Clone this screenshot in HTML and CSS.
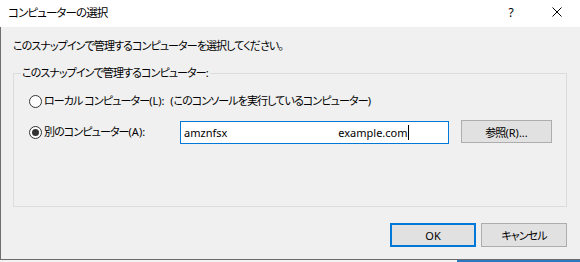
FILE: index.html
```html
<!DOCTYPE html>
<html lang="ja">
  <head>
    <meta charset="UTF-8" />
    <title>コンピューターの選択</title>
    <link rel="stylesheet" href="styles.css">
  </head>
  <body>
    <div class="dialog">
      <div class="titlebar">
        <span class="title">コンピューターの選択</span>
        <div class="caption-buttons">
          <span class="caption-btn help">?</span>
          <span class="caption-btn close">
            <svg width="10" height="10" viewBox="0 0 10 10">
              <path d="M0.5 0.5 L9.5 9.5 M9.5 0.5 L0.5 9.5" stroke="#000" stroke-width="1" fill="none"/>
            </svg>
          </span>
        </div>
      </div>

      <div class="client">
        <p class="intro">このスナップインで管理するコンピューターを選択してください。</p>

        <fieldset class="group">
          <legend>このスナップインで管理するコンピューター<span class="latin">:</span></legend>

          <div class="radio-row">
            <span class="radio"></span>
            <span class="radio-label">ローカル コンピューター<span class="latin">(L):&nbsp;&nbsp;(</span>このコンソールを実行しているコンピューター<span class="latin">)</span></span>
          </div>

          <div class="radio-row">
            <span class="radio checked"></span>
            <span class="radio-label fixed">別のコンピューター<span class="latin">(A):</span></span>
            <div class="text-input">
              <span>amznfsx</span>
              <span class="redacted"></span>
              <span>example.com</span>
              <span class="caret"></span>
            </div>
            <button class="btn browse">参照<span class="latin">(R)...</span></button>
          </div>
        </fieldset>

        <div class="actions">
          <button class="btn default"><span class="latin">OK</span></button>
          <button class="btn">キャンセル</button>
        </div>
      </div>
    </div>
    <div class="desktop-strip"><span class="taskbar-edge"></span></div>
  </body>
</html>
```

FILE: styles.css
```css
* {
  margin: 0;
  padding: 0;
  box-sizing: border-box;
}

body {
  width: 580px;
  height: 262px;
  overflow: hidden;
  background-color: #f0f0f0;
  color: #000;
  font-family: "Noto Sans", "Noto Sans CJK JP", sans-serif;
  font-size: 11px;
  letter-spacing: -0.9px;
  font-feature-settings: "palt";
}

.latin {
  letter-spacing: 0;
}

.dialog {
  height: 260px;
  border-bottom: 1px solid #6b6b6b;
}

.titlebar {
  height: 27px;
  background-color: #fff;
  display: flex;
  align-items: center;
  justify-content: space-between;
  padding-left: 8px;
}

.title {
  font-size: 11.5px;
  line-height: 16px;
  margin-top: -1px;
}

.caption-buttons {
  display: flex;
  height: 100%;
}

.caption-btn {
  width: 46px;
  height: 100%;
  display: flex;
  align-items: center;
  justify-content: center;
}

.caption-btn.help {
  font-size: 12px;
  letter-spacing: 0;
  padding-bottom: 3px;
}

.caption-btn.close svg {
  margin-top: -3px;
}

.client {
  height: 232px;
  border-left: 1px solid #6f6f6f;
  padding: 11px 12px 0 12px;
}

.intro {
  line-height: 16px;
}

.group {
  margin-top: 11px;
  width: 554px;
  height: 142px;
  border: 1px solid #dcdcdc;
  padding: 10px 0 0 15px;
}

.group legend {
  margin-left: -8px;
  padding: 0 1px;
  line-height: 16px;
}

.radio-row {
  display: flex;
  align-items: center;
  height: 20px;
}

.radio-row + .radio-row {
  margin-top: 9px;
  height: 24px;
}

.radio {
  width: 13px;
  height: 13px;
  border: 1px solid #333;
  border-radius: 50%;
  background-color: #fff;
  display: flex;
  align-items: center;
  justify-content: center;
  margin-right: 2px;
}

.radio.checked::after {
  content: "";
  width: 7px;
  height: 7px;
  border-radius: 50%;
  background-color: #333;
}

.radio-label {
  line-height: 16px;
}

.radio-label.fixed {
  width: 136px;
}

.text-input {
  width: 269px;
  height: 23px;
  background-color: #fff;
  border: 1px solid #0078d7;
  display: flex;
  align-items: center;
  padding-left: 3px;
  margin-top: 1px;
  font-size: 11px;
  letter-spacing: 0;
}

.redacted {
  width: 111px;
}

.caret {
  width: 1px;
  height: 15px;
  background-color: #000;
}

.btn {
  font: inherit;
  letter-spacing: inherit;
  font-feature-settings: inherit;
  color: #000;
  background-color: #e1e1e1;
  border: 1px solid #adadad;
  height: 24px;
  width: 86px;
}

.btn.browse {
  width: 91px;
  height: 23px;
  margin-left: 12px;
  margin-top: -1px;
}

.btn.default {
  border: 2px solid #0078d7;
}

.actions {
  display: flex;
  justify-content: flex-end;
  gap: 5px;
  margin-top: 16px;
  padding-right: 1px;
}

.desktop-strip {
  height: 2px;
  background-color: #f3f3f3;
  position: relative;
}

.taskbar-edge {
  position: absolute;
  left: 457px;
  right: 0;
  top: 0;
  height: 2px;
  background-color: #2b79c2;
}
```
